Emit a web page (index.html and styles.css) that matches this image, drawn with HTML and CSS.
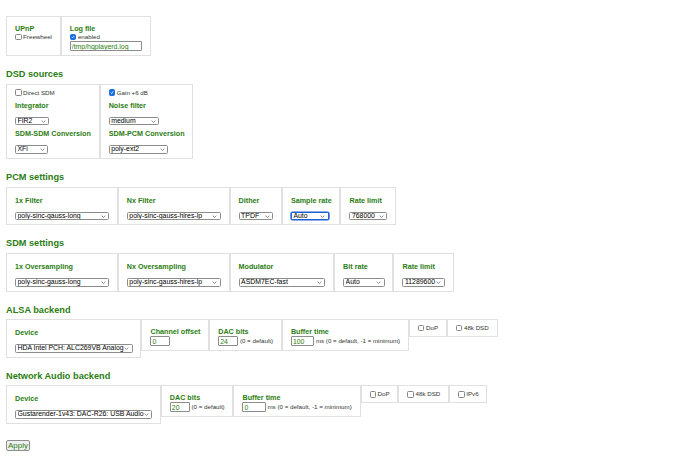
FILE: index.html
```html
<!DOCTYPE html>
<html>
<head>
<meta charset="utf-8">
<title>HQPlayer settings</title>
<link rel="stylesheet" href="styles.css">
</head>
<body>
<div class="row eq">
  <div class="cell">
    <div class="lbl tight">UPnP</div>
    <label class="chk"><input type="checkbox"><span>Freewheel</span></label>
  </div>
  <div class="cell">
    <div class="lbl tight">Log file</div>
    <label class="chk"><input type="checkbox" checked><span>enabled</span></label>
    <input class="txt t-log" type="text" value="/tmp/hqplayerd.log">
  </div>
</div>

<h2 class="sec">DSD sources</h2>
<div class="row eq">
  <div class="cell">
    <label class="chk"><input type="checkbox"><span>Direct SDM</span></label>
    <div class="lbl">Integrator</div>
    <select class="sel s-integrator"><option>FIR2</option></select>
    <div class="lbl">SDM-SDM Conversion</div>
    <select class="sel s-sdmconv"><option>XFi</option></select>
  </div>
  <div class="cell">
    <label class="chk"><input type="checkbox" checked><span>Gain +6 dB</span></label>
    <div class="lbl">Noise filter</div>
    <select class="sel s-noise"><option>medium</option></select>
    <div class="lbl">SDM-PCM Conversion</div>
    <select class="sel s-pcmconv"><option>poly-ext2</option></select>
  </div>
</div>

<h2 class="sec">PCM settings</h2>
<div class="row eq">
  <div class="cell">
    <div class="lbl">1x Filter</div>
    <select class="sel s-filter"><option>poly-sinc-gauss-long</option></select>
  </div>
  <div class="cell">
    <div class="lbl">Nx Filter</div>
    <select class="sel s-filter"><option>poly-sinc-gauss-hires-lp</option></select>
  </div>
  <div class="cell">
    <div class="lbl">Dither</div>
    <select class="sel s-dither"><option>TPDF</option></select>
  </div>
  <div class="cell">
    <div class="lbl">Sample rate</div>
    <select class="sel s-rate focus"><option>Auto</option></select>
  </div>
  <div class="cell">
    <div class="lbl">Rate limit</div>
    <select class="sel s-limit"><option>768000</option></select>
  </div>
</div>

<h2 class="sec">SDM settings</h2>
<div class="row eq">
  <div class="cell">
    <div class="lbl">1x Oversampling</div>
    <select class="sel s-filter"><option>poly-sinc-gauss-long</option></select>
  </div>
  <div class="cell">
    <div class="lbl">Nx Oversampling</div>
    <select class="sel s-filter"><option>poly-sinc-gauss-hires-lp</option></select>
  </div>
  <div class="cell">
    <div class="lbl">Modulator</div>
    <select class="sel s-mod"><option>ASDM7EC-fast</option></select>
  </div>
  <div class="cell">
    <div class="lbl">Bit rate</div>
    <select class="sel s-bitrate"><option>Auto</option></select>
  </div>
  <div class="cell">
    <div class="lbl">Rate limit</div>
    <select class="sel s-sdmlimit"><option>11289600</option></select>
  </div>
</div>

<h2 class="sec">ALSA backend</h2>
<div class="row">
  <div class="cell">
    <div class="lbl">Device</div>
    <select class="sel s-alsa"><option>HDA Intel PCH: ALC269VB Analog</option></select>
  </div>
  <div class="cell">
    <div class="lbl tight">Channel offset</div>
    <div class="field"><input class="txt t-small" type="text" value="0"></div>
  </div>
  <div class="cell">
    <div class="lbl tight">DAC bits</div>
    <div class="field"><input class="txt t-small" type="text" value="24"><span>(0 = default)</span></div>
  </div>
  <div class="cell">
    <div class="lbl tight">Buffer time</div>
    <div class="field"><input class="txt t-buf" type="text" value="100"><span>ms (0 = default, -1 = minimum)</span></div>
  </div>
  <div class="cell">
    <label class="chk"><input type="checkbox"><span>DoP</span></label>
  </div>
  <div class="cell">
    <label class="chk"><input type="checkbox"><span>48k DSD</span></label>
  </div>
</div>

<h2 class="sec">Network Audio backend</h2>
<div class="row">
  <div class="cell">
    <div class="lbl">Device</div>
    <select class="sel s-na"><option>Gustarender-1v43: DAC-R26: USB Audio</option></select>
  </div>
  <div class="cell">
    <div class="lbl tight">DAC bits</div>
    <div class="field"><input class="txt t-small" type="text" value="20"><span>(0 = default)</span></div>
  </div>
  <div class="cell">
    <div class="lbl tight">Buffer time</div>
    <div class="field"><input class="txt t-buf" type="text" value="0"><span>ms (0 = default, -1 = minimum)</span></div>
  </div>
  <div class="cell">
    <label class="chk"><input type="checkbox"><span>DoP</span></label>
  </div>
  <div class="cell">
    <label class="chk"><input type="checkbox"><span>48k DSD</span></label>
  </div>
  <div class="cell">
    <label class="chk"><input type="checkbox"><span>IPv6</span></label>
  </div>
</div>

<div class="actions">
  <button class="btn" type="button">Apply</button>
</div>
</body>
</html>
```

FILE: styles.css
```css
* {
  box-sizing: border-box;
}

body {
  margin: 0;
  padding: 16px 6px;
  font-family: "Liberation Sans", Arial, sans-serif;
  background: #ffffff;
  color: #222222;
}

.row {
  display: flex;
  width: max-content;
  align-items: flex-start;
}

.row.eq {
  align-items: stretch;
}

.cell {
  border: 1px solid #e0e0e0;
  padding: 4px 7.8px 4px 8px;
  white-space: nowrap;
  font-size: 6.2px;
  line-height: 8px;
}

.sec {
  font-size: 9.2px;
  line-height: 11px;
  font-weight: bold;
  color: #2b7d12;
  margin: 13px 0 3.5px;
}

.lbl {
  font-size: 7.2px;
  line-height: 9px;
  font-weight: bold;
  color: #2b7d12;
  margin: 4px 0 7px;
}

.lbl.tight {
  line-height: 8px;
  margin-bottom: 0;
}

.chk {
  display: flex;
  align-items: center;
  gap: 1.6px;
  height: 8px;
  font-size: 6.2px;
  color: #333333;
}

.chk input {
  -webkit-appearance: none;
  appearance: none;
  display: block;
  flex: none;
  margin: 0;
  width: 6.5px;
  height: 6.5px;
  border: 1px solid #858585;
  border-radius: 1.5px;
  background: #ffffff;
}

.chk input:checked {
  border-color: #1a6fe0;
  background: #1a6fe0 url("data:image/svg+xml,%3Csvg xmlns='http://www.w3.org/2000/svg' viewBox='0 0 10 10'%3E%3Cpath d='M2 5.2l2 2 4-4.6' fill='none' stroke='%23fff' stroke-width='1.8'/%3E%3C/svg%3E") no-repeat center / 100% 100%;
}

.sel {
  display: block;
  -webkit-appearance: none;
  appearance: none;
  height: 8.8px;
  margin: 0;
  padding: 0 0 0 1.5px;
  font-family: "Liberation Sans", Arial, sans-serif;
  font-size: 6.9px;
  line-height: 6.8px;
  color: #000000;
  border: 1px solid #8c8c8c;
  border-radius: 1.5px;
  background: #ffffff url("data:image/svg+xml,%3Csvg xmlns='http://www.w3.org/2000/svg' viewBox='0 0 8 5'%3E%3Cpath d='M1 1l3 3 3-3' fill='none' stroke='%23444' stroke-width='1'/%3E%3C/svg%3E") no-repeat right 3px center / 4.5px 2.8px;
}

.sel.focus {
  border-color: #1b5fd6;
  box-shadow: 0 0 0 0.6px #1b5fd6;
}

.s-integrator { width: 34px; }
.s-sdmconv { width: 33px; }
.s-noise { width: 50.5px; }
.s-pcmconv { width: 59.5px; }
.s-filter { width: 94px; }
.s-dither { width: 34.5px; }
.s-rate { width: 38px; }
.s-limit { width: 38px; }
.s-mod { width: 86.7px; }
.s-bitrate { width: 41.6px; }
.s-sdmlimit { width: 42.3px; }
.s-alsa { width: 117.7px; }
.s-na { width: 137px; }

.txt {
  display: block;
  height: 10px;
  margin: 0;
  padding: 0 1px;
  font-family: "Liberation Sans", Arial, sans-serif;
  font-size: 6.9px;
  color: #2b7d12;
  border: 1px solid #8c8c8c;
  border-radius: 1px;
  background: #ffffff;
}

.t-log { width: 72px; }
.t-small { width: 20px; }
.t-buf { width: 23.3px; }

.field {
  display: flex;
  align-items: center;
  gap: 1.7px;
  font-size: 6.2px;
  color: #333333;
}

.actions {
  margin-top: 15.5px;
  font-size: 8px;
  line-height: 12px;
}

.btn {
  display: block;
  height: 11.7px;
  margin: 0;
  padding: 0 1px;
  font-family: "Liberation Sans", Arial, sans-serif;
  font-size: 8px;
  line-height: 9px;
  color: #2b7d12;
  border: 1px solid #8d8d8d;
  border-radius: 2px;
  background: #efefef;
}
```
